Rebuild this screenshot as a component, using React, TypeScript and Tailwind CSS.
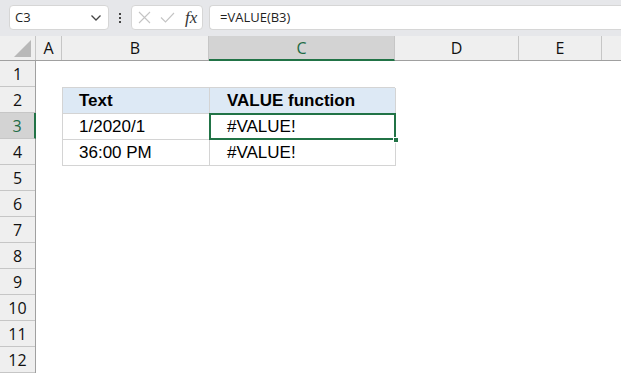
import React from 'react';

const COLS = [
  { key: 'A', w: 26 },
  { key: 'B', w: 147 },
  { key: 'C', w: 186 },
  { key: 'D', w: 124 },
  { key: 'E', w: 83 },
];

const ROWS = [1, 2, 3, 4, 5, 6, 7, 8, 9, 10, 11, 12];

const cellFont = { fontFamily: '"Liberation Sans", Arial, sans-serif' };

const FormulaBar: React.FC = () => (
  <div className="flex items-center h-[36px] bg-[#e6e7ea] pl-[9px] pb-[6px] pt-[5px] gap-0">
    {/* Name box */}
    <div className="flex items-center justify-between w-[100px] h-[25px] bg-white border border-[#d6d6d6] rounded-[4px] pl-[5px] pr-[6px]">
      <span className="text-[13px] text-[#1f1f1f]">C3</span>
      <svg width="12" height="8" viewBox="0 0 12 8" fill="none">
        <path d="M1.5 1.5 L6 6 L10.5 1.5" stroke="#444" strokeWidth="1.3" />
      </svg>
    </div>
    {/* dots */}
    <div className="w-[22px] flex flex-col items-center gap-[2px]">
      <span className="w-[2px] h-[2px] bg-[#444]" />
      <span className="w-[2px] h-[2px] bg-[#444]" />
      <span className="w-[2px] h-[2px] bg-[#444]" />
    </div>
    {/* cancel / enter / fx */}
    <div className="flex items-center w-[72px] h-[25px] bg-white border border-[#d6d6d6] rounded-[4px] pl-[6px]">
      <svg width="13" height="13" viewBox="0 0 13 13" fill="none">
        <path d="M1 1 L12 12 M12 1 L1 12" stroke="#c4c4c4" strokeWidth="1.1" />
      </svg>
      <svg className="ml-[9px]" width="15" height="11" viewBox="0 0 15 11" fill="none">
        <path d="M1 5.5 L5.5 10 L14 1" stroke="#c4c4c4" strokeWidth="1.1" />
      </svg>
      <span
        className="ml-[10px] text-[17px] italic text-[#333] leading-none"
        style={{ fontFamily: '"Liberation Serif", "Times New Roman", serif' }}
      >
        fx
      </span>
    </div>
    {/* formula input */}
    <div className="flex items-center flex-1 h-[25px] ml-[6px] bg-white border border-[#d6d6d6] border-r-0 rounded-l-[4px] pl-[10px]">
      <span className="text-[13px] text-[#1f1f1f]">=VALUE(B3)</span>
    </div>
  </div>
);

const App: React.FC = () => {
  return (
    <div
      className="w-[621px] h-[375px] overflow-hidden bg-white text-black"
      style={{ fontFamily: '"Open Sans", "Noto Sans", sans-serif' }}
    >
      <FormulaBar />

      {/* Column headers */}
      <div className="flex h-[25px] bg-[#efefef] border-b border-[#a0a0a0]">
        <div className="relative w-[36px] shrink-0 border-r border-[#c6c6c6]">
          <div className="absolute right-[4px] bottom-[3px] w-0 h-0 border-l-[17px] border-l-transparent border-b-[17px] border-b-[#b8b8b8]" />
        </div>
        {COLS.map((c) => (
          <div
            key={c.key}
            style={{ width: c.w }}
            className={`shrink-0 flex items-center justify-center text-[16px] border-r border-[#c6c6c6] ${
              c.key === 'C'
                ? 'bg-[#d3d3d3] text-[#1e6b45] border-b-2 border-b-[#217346] -mb-px'
                : 'text-[#111]'
            }`}
          >
            {c.key}
          </div>
        ))}
        <div className="flex-1" />
      </div>

      {/* Body */}
      <div className="flex">
        {/* Row headers */}
        <div className="w-[36px] shrink-0 bg-[#efefef] border-r border-[#a0a0a0]">
          {ROWS.map((r) => (
            <div
              key={r}
              className={`h-[26px] flex items-center justify-center text-[16px] border-b border-[#c6c6c6] ${
                r === 3 ? 'bg-[#d3d3d3] text-[#1e6b45] border-r-2 border-r-[#217346] -mr-px' : 'text-[#111]'
              }`}
            >
              {r}
            </div>
          ))}
        </div>

        {/* Sheet */}
        <div className="flex-1 pt-[26px] pl-[26px]" style={cellFont}>
          <div className="grid grid-cols-[147px_186px] w-[333px] border-l border-t border-[#d4d4d4]">
            <div className="h-[26px] bg-[#dde9f5] border-r border-b border-[#d4d4d4] pl-[16px] flex items-center text-[17px] font-bold">
              Text
            </div>
            <div className="h-[26px] bg-[#dde9f5] border-r border-b border-[#d4d4d4] pl-[17px] flex items-center text-[17px] font-bold">
              VALUE function
            </div>

            <div className="h-[26px] border-r border-b border-[#d4d4d4] pl-[16px] flex items-center text-[17px]">
              1/2020/1
            </div>
            <div className="relative h-[26px] border-r border-b border-[#d4d4d4] pl-[17px] flex items-center text-[17px]">
              #VALUE!
              <div className="absolute -left-px -top-px -right-px -bottom-px border-2 border-[#217346] pointer-events-none" />
              <div className="absolute -right-[4px] -bottom-[4px] w-[6px] h-[6px] bg-[#217346] border border-white" />
            </div>

            <div className="h-[26px] border-r border-b border-[#d4d4d4] pl-[16px] flex items-center text-[17px]">
              36:00 PM
            </div>
            <div className="h-[26px] border-r border-b border-[#d4d4d4] pl-[17px] flex items-center text-[17px]">
              #VALUE!
            </div>
          </div>
        </div>
      </div>
    </div>
  );
};

export default App;
